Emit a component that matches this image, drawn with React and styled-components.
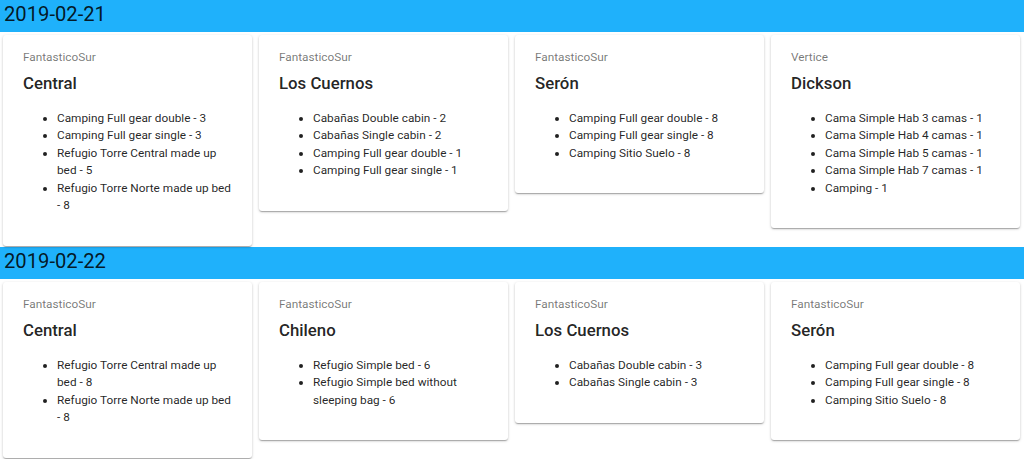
import styled, { createGlobalStyle } from "styled-components";

const days = [
  {
    date: "2019-02-21",
    camps: [
      {
        company: "FantasticoSur",
        name: "Central",
        items: [
          "Camping Full gear double - 3",
          "Camping Full gear single - 3",
          "Refugio Torre Central made up bed - 5",
          "Refugio Torre Norte made up bed - 8",
        ],
      },
      {
        company: "FantasticoSur",
        name: "Los Cuernos",
        items: [
          "Cabañas Double cabin - 2",
          "Cabañas Single cabin - 2",
          "Camping Full gear double - 1",
          "Camping Full gear single - 1",
        ],
      },
      {
        company: "FantasticoSur",
        name: "Serón",
        items: [
          "Camping Full gear double - 8",
          "Camping Full gear single - 8",
          "Camping Sitio Suelo - 8",
        ],
      },
      {
        company: "Vertice",
        name: "Dickson",
        items: [
          "Cama Simple Hab 3 camas - 1",
          "Cama Simple Hab 4 camas - 1",
          "Cama Simple Hab 5 camas - 1",
          "Cama Simple Hab 7 camas - 1",
          "Camping - 1",
        ],
      },
    ],
  },
  {
    date: "2019-02-22",
    camps: [
      {
        company: "FantasticoSur",
        name: "Central",
        items: [
          "Refugio Torre Central made up bed - 8",
          "Refugio Torre Norte made up bed - 8",
        ],
      },
      {
        company: "FantasticoSur",
        name: "Chileno",
        items: [
          "Refugio Simple bed - 6",
          "Refugio Simple bed without sleeping bag - 6",
        ],
      },
      {
        company: "FantasticoSur",
        name: "Los Cuernos",
        items: ["Cabañas Double cabin - 3", "Cabañas Single cabin - 3"],
      },
      {
        company: "FantasticoSur",
        name: "Serón",
        items: [
          "Camping Full gear double - 8",
          "Camping Full gear single - 8",
          "Camping Sitio Suelo - 8",
        ],
      },
    ],
  },
];

const GlobalStyle = createGlobalStyle`
  body {
    margin: 0;
    background: #fff;
    font-family: Roboto, "Helvetica", Arial, sans-serif;
    color: rgba(0, 0, 0, 0.87);
  }
`;

const DateBar = styled.h2`
  margin: 0;
  padding: 0 4px 3px;
  background: #1fb1fb;
  font-size: 20.2px;
  font-weight: 400;
  line-height: 29px;
  color: rgba(0, 0, 0, 0.87);
`;

const Cards = styled.div`
  display: grid;
  grid-template-columns: repeat(4, 1fr);
  column-gap: 7px;
  align-items: start;
  padding: 3px 4px 1px 3px;
`;

const Card = styled.div`
  background: #fff;
  border-radius: 3px;
  padding: 14px 19px 19px 20px;
  box-shadow: 0px 1px 3px 0px rgba(0, 0, 0, 0.2),
    0px 1px 1px 0px rgba(0, 0, 0, 0.14), 0px 2px 1px -1px rgba(0, 0, 0, 0.12);
`;

const Company = styled.div`
  font-size: 11.8px;
  line-height: 16.8px;
  color: rgba(0, 0, 0, 0.54);
`;

const CampName = styled.h3`
  margin: 5.6px 0 0;
  font-size: 16.8px;
  font-weight: 500;
  line-height: 25.6px;
`;

const List = styled.ul`
  margin: 12.8px 0 12px;
  padding-left: 34px;
  font-size: 11.8px;
  line-height: 17.5px;
`;

function Camp({ camp }) {
  return (
    <Card>
      <Company>{camp.company}</Company>
      <CampName>{camp.name}</CampName>
      <List>
        {camp.items.map((i) => (
          <li key={i}>{i}</li>
        ))}
      </List>
    </Card>
  );
}

export default function App() {
  return (
    <>
      <GlobalStyle />
      {days.map((d) => (
        <section key={d.date}>
          <DateBar>{d.date}</DateBar>
          <Cards>
            {d.camps.map((c) => (
              <Camp key={c.name} camp={c} />
            ))}
          </Cards>
        </section>
      ))}
    </>
  );
}
